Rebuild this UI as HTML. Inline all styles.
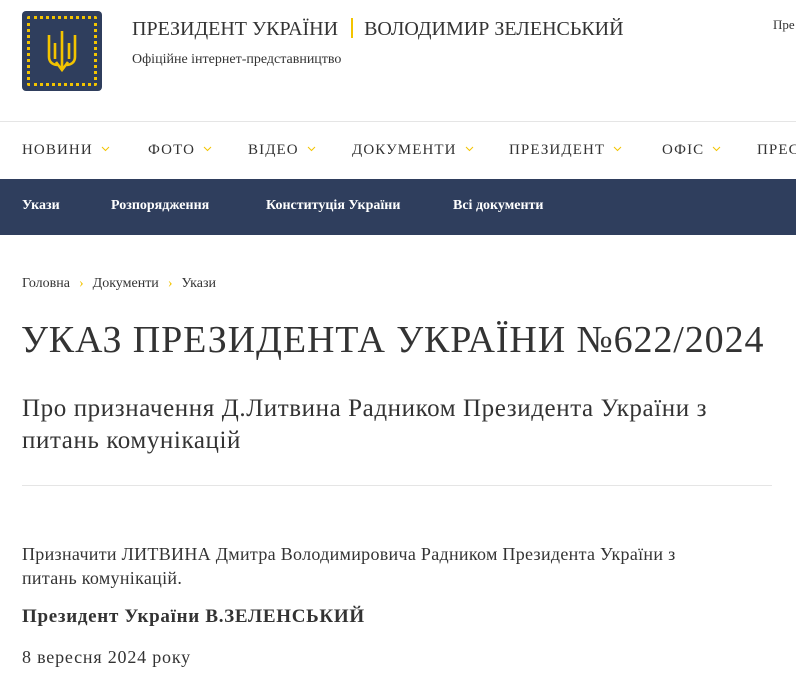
<!DOCTYPE html>
<html><head><meta charset="utf-8"><style>
body{margin:0;width:796px;height:688px;overflow:hidden;background:#fff;font-family:"Liberation Serif",serif;color:#222;position:relative}
.a{position:absolute;white-space:nowrap}
.logo{left:22px;top:11px;width:80px;height:80px;background:#2f3e5d;border-radius:4px}
.logo .fr{position:absolute;left:5px;top:5px;width:64px;height:64px;border:3px dotted #f3c400;border-radius:2px}
.nav{top:121px;left:0;width:796px;height:57px;border-top:1px solid #e5e5e5}
.nav span{position:absolute;top:20px;font-size:15px;letter-spacing:1.1px;color:#333}
.nav svg{margin-left:8px;vertical-align:2px}
.sub{top:179px;left:0;width:796px;height:56px;background:#2f3e5d}
.sub span{position:absolute;top:19px;color:#fff;font-size:14px;font-weight:bold}
.ch{color:#f3c400;margin:0 9px}
</style></head><body>
<div class="a logo"><div class="fr"></div>
<svg style="position:absolute;left:24px;top:18px" width="32" height="44" viewBox="0 0 32 44" fill="none" stroke="#f3c400" stroke-width="2.6"><path d="M16 2v38M3 6v22c0 6 5 8 9 8M29 6v22c0 6-5 8-9 8M9 14v16M23 14v16M10 33l6 8 6-8"/></svg></div>
<div class="a" style="left:132px;top:18px;font-size:20px;color:#333">ПРЕЗИДЕНТ УКРАЇНИ <span style="display:inline-block;width:2px;height:20px;background:#f3c400;vertical-align:-3px;margin:0 11px 0 8px"></span>ВОЛОДИМИР ЗЕЛЕНСЬКИЙ</div>
<div class="a" style="left:132px;top:52px;font-size:14px;color:#333">Офіційне інтернет-представництво</div>
<div class="a" style="left:773px;top:17px;font-size:13px;color:#333">Пре</div>
<div class="a nav">
<span style="left:22px">НОВИНИ<svg width="9" height="6"><path d="M1 1l3.5 3.5L8 1" stroke="#f3c400" fill="none"/></svg></span>
<span style="left:148px">ФОТО<svg width="9" height="6"><path d="M1 1l3.5 3.5L8 1" stroke="#f3c400" fill="none"/></svg></span>
<span style="left:248px">ВІДЕО<svg width="9" height="6"><path d="M1 1l3.5 3.5L8 1" stroke="#f3c400" fill="none"/></svg></span>
<span style="left:352px">ДОКУМЕНТИ<svg width="9" height="6"><path d="M1 1l3.5 3.5L8 1" stroke="#f3c400" fill="none"/></svg></span>
<span style="left:509px">ПРЕЗИДЕНТ<svg width="9" height="6"><path d="M1 1l3.5 3.5L8 1" stroke="#f3c400" fill="none"/></svg></span>
<span style="left:662px">ОФІС<svg width="9" height="6"><path d="M1 1l3.5 3.5L8 1" stroke="#f3c400" fill="none"/></svg></span>
<span style="left:757px">ПРЕС</span>
</div>
<div class="a sub">
<span style="left:22px">Укази</span>
<span style="left:111px">Розпорядження</span>
<span style="left:266px">Конституція України</span>
<span style="left:453px">Всі документи</span>
</div>
<div class="a" style="left:22px;top:276px;font-size:14px;color:#333">Головна<span class="ch">›</span>Документи<span class="ch">›</span>Укази</div>
<div class="a" style="left:21px;top:318px;font-size:38px;letter-spacing:0.9px;color:#333">УКАЗ ПРЕЗИДЕНТА УКРАЇНИ №622/2024</div>
<div class="a" style="left:22px;top:393px;font-size:25px;letter-spacing:0.6px;line-height:32px;color:#333;white-space:normal;width:730px">Про призначення Д.Литвина Радником Президента України з питань комунікацій</div>
<div class="a" style="left:22px;top:485px;width:750px;height:1px;background:#e5e5e5"></div>
<div class="a" style="left:22px;top:542px;font-size:18px;letter-spacing:0.3px;line-height:24px;color:#333;white-space:normal;width:712px">Призначити ЛИТВИНА Дмитра Володимировича Радником Президента України з питань комунікацій.</div>
<div class="a" style="left:22px;top:606px;font-size:19px;letter-spacing:0.7px;font-weight:bold;color:#333">Президент України В.ЗЕЛЕНСЬКИЙ</div>
<div class="a" style="left:22px;top:647px;font-size:18px;letter-spacing:0.8px;color:#333">8 вересня 2024 року</div>
</body></html>
